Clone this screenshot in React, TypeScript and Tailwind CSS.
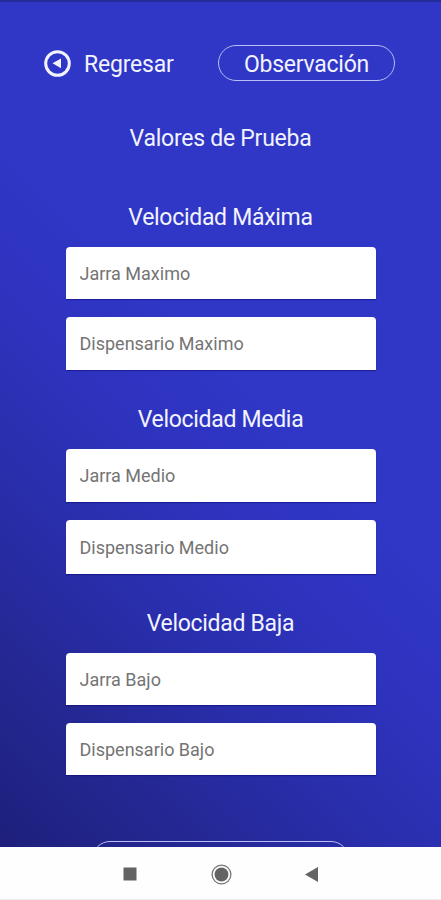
import React from 'react';

type FieldProps = { label: string; className: string };

function Field({ label, className }: FieldProps) {
  return (
    <input
      type="text"
      placeholder={label}
      aria-label={label}
      className={`block w-full rounded-t-[4px] bg-white px-[14px] text-[18px] text-[#333] shadow-[0_1px_1px_rgba(10,10,110,0.55)] outline-none placeholder:text-[#747474] placeholder:opacity-100 ${className}`}
    />
  );
}

function Title({ children }: { children: React.ReactNode }) {
  return (
    <h2 className="h-[30px] whitespace-nowrap pt-px text-center text-[23px] leading-[30px] tracking-[-0.3px]">
      {children}
    </h2>
  );
}

export default function App() {
  return (
    <div className="flex h-[900px] w-[441px] flex-col overflow-hidden bg-white font-['Roboto',sans-serif]">
      <main className="h-[847px] shrink-0 overflow-hidden border-t-2 border-[#252c9c] bg-[linear-gradient(45deg,#1e1f7c_0%,#22258a_10%,#292eac_30%,#2e34c0_45%,#3036c5_55%,#3036c5_100%)] text-[#f1f3ff]">
        <header className="mt-[43px] flex h-[36px] items-center pl-[44px] pr-[46px]">
          <button className="flex items-center gap-[13px] text-[23px] leading-[30px] tracking-[-0.2px]">
            <svg width="27" height="27" viewBox="0 0 27 27" fill="none">
              <circle cx="13.5" cy="13.5" r="11.8" stroke="currentColor" strokeWidth="3" />
              <path d="M8.5 13.3 17 8.4V18.2Z" fill="currentColor" />
            </svg>
            <span className="pt-[3px]">Regresar</span>
          </button>
          <button className="ml-auto flex h-[36px] w-[177px] items-center justify-center rounded-full border-[1.5px] border-[#b9bff2] pt-[3px] text-[23px] leading-[30px] tracking-[-0.25px]">
            Observación
          </button>
        </header>

        <h1 className="mt-[42px] h-[30px] pt-px text-center text-[23px] leading-[30px] tracking-[-0.25px]">Valores de Prueba</h1>

        <form className="mx-auto mt-[49px] w-[310px]">
          <Title>Velocidad Máxima</Title>
          <Field label="Jarra Maximo" className="mt-[15px] h-[52px] pt-px" />
          <Field label="Dispensario Maximo" className="mt-[18px] h-[53px]" />

          <div className="mt-[34px]">
            <Title>Velocidad Media</Title>
          </div>
          <Field label="Jarra Medio" className="mt-[15px] h-[53px]" />
          <Field label="Dispensario Medio" className="mt-[18px] h-[54px]" />

          <div className="mt-[34px]">
            <Title>Velocidad Baja</Title>
          </div>
          <Field label="Jarra Bajo" className="mt-[15px] h-[52px] pt-px" />
          <Field label="Dispensario Bajo" className="mt-[18px] h-[52px] pt-px" />
        </form>

        <button aria-label="Guardar" className="mx-auto mt-[66px] block h-[36px] w-[257px] rounded-full border-[1.5px] border-[#b9bff2]" />
      </main>

      <nav className="flex h-[52px] w-full shrink-0 items-center justify-center bg-[#fefefe] pt-px">
        <svg width="200" height="24" viewBox="0 0 200 24" fill="#636363">
          <rect x="2.5" y="5.5" width="13" height="13" />
          <circle cx="100.5" cy="12.5" r="9.4" fill="none" stroke="#777" strokeWidth="1.3" />
          <circle cx="100.5" cy="12.5" r="6.9" />
          <path d="M184 12.5 197 5V20Z" />
        </svg>
      </nav>
      <div className="h-px bg-[#eeeeee]" />
    </div>
  );
}
